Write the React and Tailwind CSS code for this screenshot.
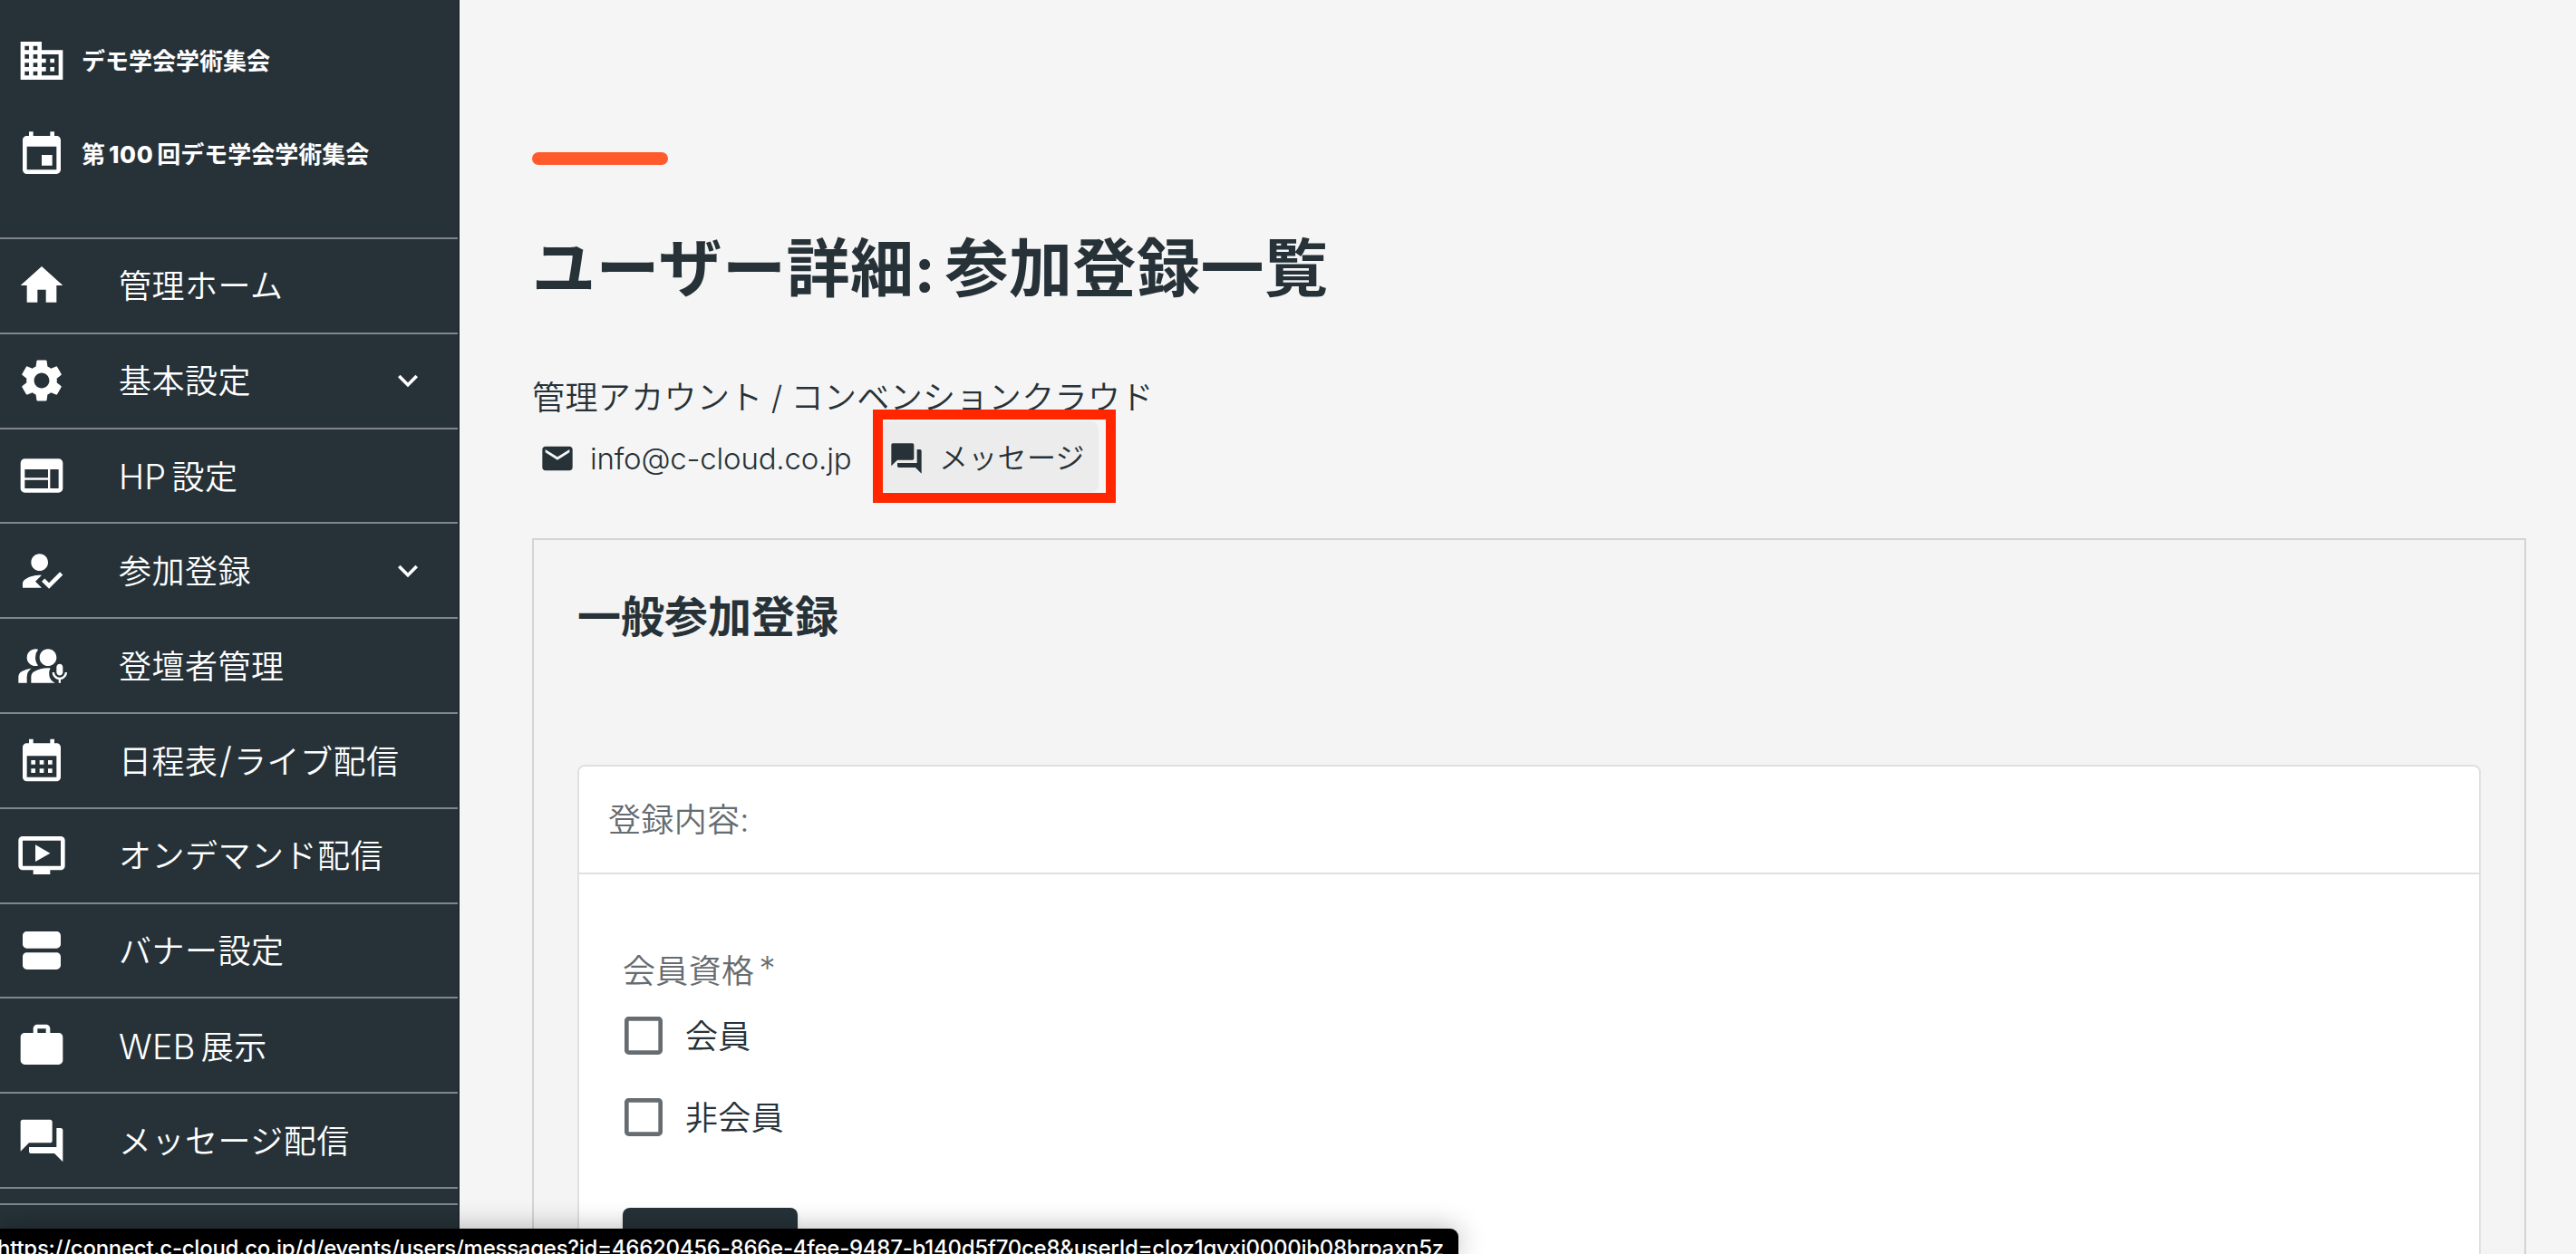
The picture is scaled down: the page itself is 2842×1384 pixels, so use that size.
import {
  MdBusiness,
  MdCalendarMonth,
  MdCheckBoxOutlineBlank,
  MdEmail,
  MdEvent,
  MdExpandMore,
  MdForum,
  MdHome,
  MdHowToReg,
  MdInterpreterMode,
  MdOndemandVideo,
  MdSettings,
  MdViewAgenda,
  MdWeb,
  MdWork,
} from "react-icons/md";

const STATUS_URL =
  "https://connect.c-cloud.co.jp/d/events/users/messages?id=46620456-866e-4fee-9487-b140d5f70ce8&userId=cloz1gvxi0000ib08brpaxn5z";

const NAV_ITEMS = [
  { id: "home", icon: MdHome, label: "管理ホーム" },
  { id: "settings", icon: MdSettings, label: "基本設定", expandable: true },
  { id: "hp", icon: MdWeb, prefix: "HP", label: "設定" },
  { id: "entry", icon: MdHowToReg, label: "参加登録", expandable: true },
  { id: "speakers", icon: MdInterpreterMode, label: "登壇者管理" },
  {
    id: "schedule",
    icon: MdCalendarMonth,
    label: (
      <>
        日程表<span className="mx-[1.5px] text-[40px] leading-none">/</span>
        ライブ配信
      </>
    ),
  },
  { id: "ondemand", icon: MdOndemandVideo, label: "オンデマンド配信" },
  { id: "banner", icon: MdViewAgenda, label: "バナー設定" },
  { id: "web", icon: MdWork, prefix: "WEB", label: "展示" },
  { id: "messages", icon: MdForum, label: "メッセージ配信" },
];

const MEMBER_TYPES = ["会員", "非会員"];

const NavItem = ({ icon: Icon, prefix, label, expandable }) => (
  <li className="flex h-[104.8px] items-center border-b-2 border-[#80868a] pl-[18px]">
    <Icon className="size-14 shrink-0" />
    <span className="ml-[57px] flex-1 whitespace-nowrap pt-[2px] text-[36px] font-[350] leading-none tracking-[0.5px]">
      {prefix && (
        <span className="mr-[6px] text-[38px] font-light leading-none tracking-[0.2px]">
          {prefix}
        </span>
      )}
      {label}
    </span>
    {expandable && <MdExpandMore className="mr-[33px] size-11 shrink-0" />}
  </li>
);

const Sidebar = () => (
  <aside className="w-[507px] shrink-0 border-r-2 border-[#1f2a31] bg-[#263238] text-white">
    <div className="flex h-[262px] flex-col pl-[18px] pt-[39px] text-[26px] font-bold leading-none">
      <div className="flex h-14 items-center">
        <MdBusiness className="size-14" />
        <span className="ml-4 pt-[2px]">デモ学会学術集会</span>
      </div>
      <div className="mt-[48px] flex h-14 items-center">
        <MdEvent className="size-14" />
        <span className="ml-4 whitespace-nowrap">
          第<span className="mx-1 font-extrabold tracking-[0.6px]">100</span>
          回デモ学会学術集会
        </span>
      </div>
    </div>
    <ul className="border-t-2 border-[#80868a]">
      {NAV_ITEMS.map(({ id, ...item }) => (
        <NavItem key={id} {...item} />
      ))}
    </ul>
    <div className="mt-4 border-t-2 border-[#80868a]" />
  </aside>
);

const UserContact = () => (
  <div className="flex h-[78px] items-center leading-none">
    <div className="flex w-[385px] items-center pl-2 pt-1 text-[33px]">
      <MdEmail className="size-10" />
      <span className="ml-4 font-[350] tracking-[-0.2px]">
        info@c-cloud.co.jp
      </span>
    </div>
    <div className="relative flex h-[78px] w-[240px] items-center rounded-lg bg-[#ececec] pl-2 pt-1 text-[32px]">
      <MdForum className="size-10" />
      <span className="ml-4 whitespace-nowrap font-[350] tracking-[0.3px]">
        メッセージ
      </span>
      <div className="absolute -left-[9px] -top-[13px] h-[103px] w-[268px] border-[11px] border-[#ff2600]" />
    </div>
  </div>
);

const RegistrationCard = () => (
  <section className="mt-[51px] h-[900px] border-2 border-[#d4d4d4] bg-[#f4f4f4] px-12 pt-12">
    <h2 className="mt-[13px] text-[48px] font-bold leading-[48px]">
      一般参加登録
    </h2>
    <div className="mt-[139px] h-[700px] rounded-t-lg border-2 border-[#e0e0e0] bg-white">
      <div className="flex h-[119px] items-center border-b-2 border-[#e0e0e0] pl-8 text-[36px] font-[350] tracking-[0.34px] text-[#666c70]">
        登録内容:
      </div>
      <div className="pl-12 pt-[81px] text-[36px] font-[350] leading-none tracking-[0.34px]">
        <div className="flex h-[52px] items-center text-[#666c70]">
          会員資格<span className="mb-2 ml-[5px]">*</span>
        </div>
        {MEMBER_TYPES.map((type) => (
          <label key={type} className="flex h-[90px] items-center">
            <MdCheckBoxOutlineBlank className="-ml-[5px] size-14 text-[#666c70]" />
            <span className="ml-[18px] pt-[2px]">{type}</span>
          </label>
        ))}
        <button className="mt-[55px] block h-[80px] w-[193px] rounded-lg bg-[#263238] shadow-md" />
      </div>
    </div>
  </section>
);

const App = () => (
  <div className="relative flex h-[1384px] w-[2842px] overflow-hidden bg-[#f5f5f5] font-['Inter','Noto_Sans_CJK_JP',sans-serif] text-[#263238]">
    <Sidebar />
    <main className="flex-1 pl-20 pr-[55px] pt-[168px]">
      <div className="h-[14px] w-[150px] rounded-full bg-[#ff5a2b]" />
      <h1 className="mt-[80px] whitespace-nowrap text-[70px] font-bold leading-[70px] tracking-[0.5px] [word-spacing:-7px]">
        ユーザー詳細: 参加登録一覧
      </h1>
      <p className="mt-[81px] whitespace-nowrap text-[36px] font-[350] leading-[52px] tracking-[0.38px] [word-spacing:-1.5px]">
        管理アカウント / コンベンションクラウド
      </p>
      <UserContact />
      <RegistrationCard />
    </main>
    <div className="absolute left-0 top-[1356px] h-7 w-[1609px] whitespace-nowrap rounded-tr-[9px] bg-black pt-[5px] text-[24px] font-medium leading-[34px] tracking-[-0.26px] text-white shadow-[0_0_30px_rgba(0,0,0,0.3)]">
      <span className="-ml-[3px]">{STATUS_URL}</span>
    </div>
  </div>
);

export default App;
